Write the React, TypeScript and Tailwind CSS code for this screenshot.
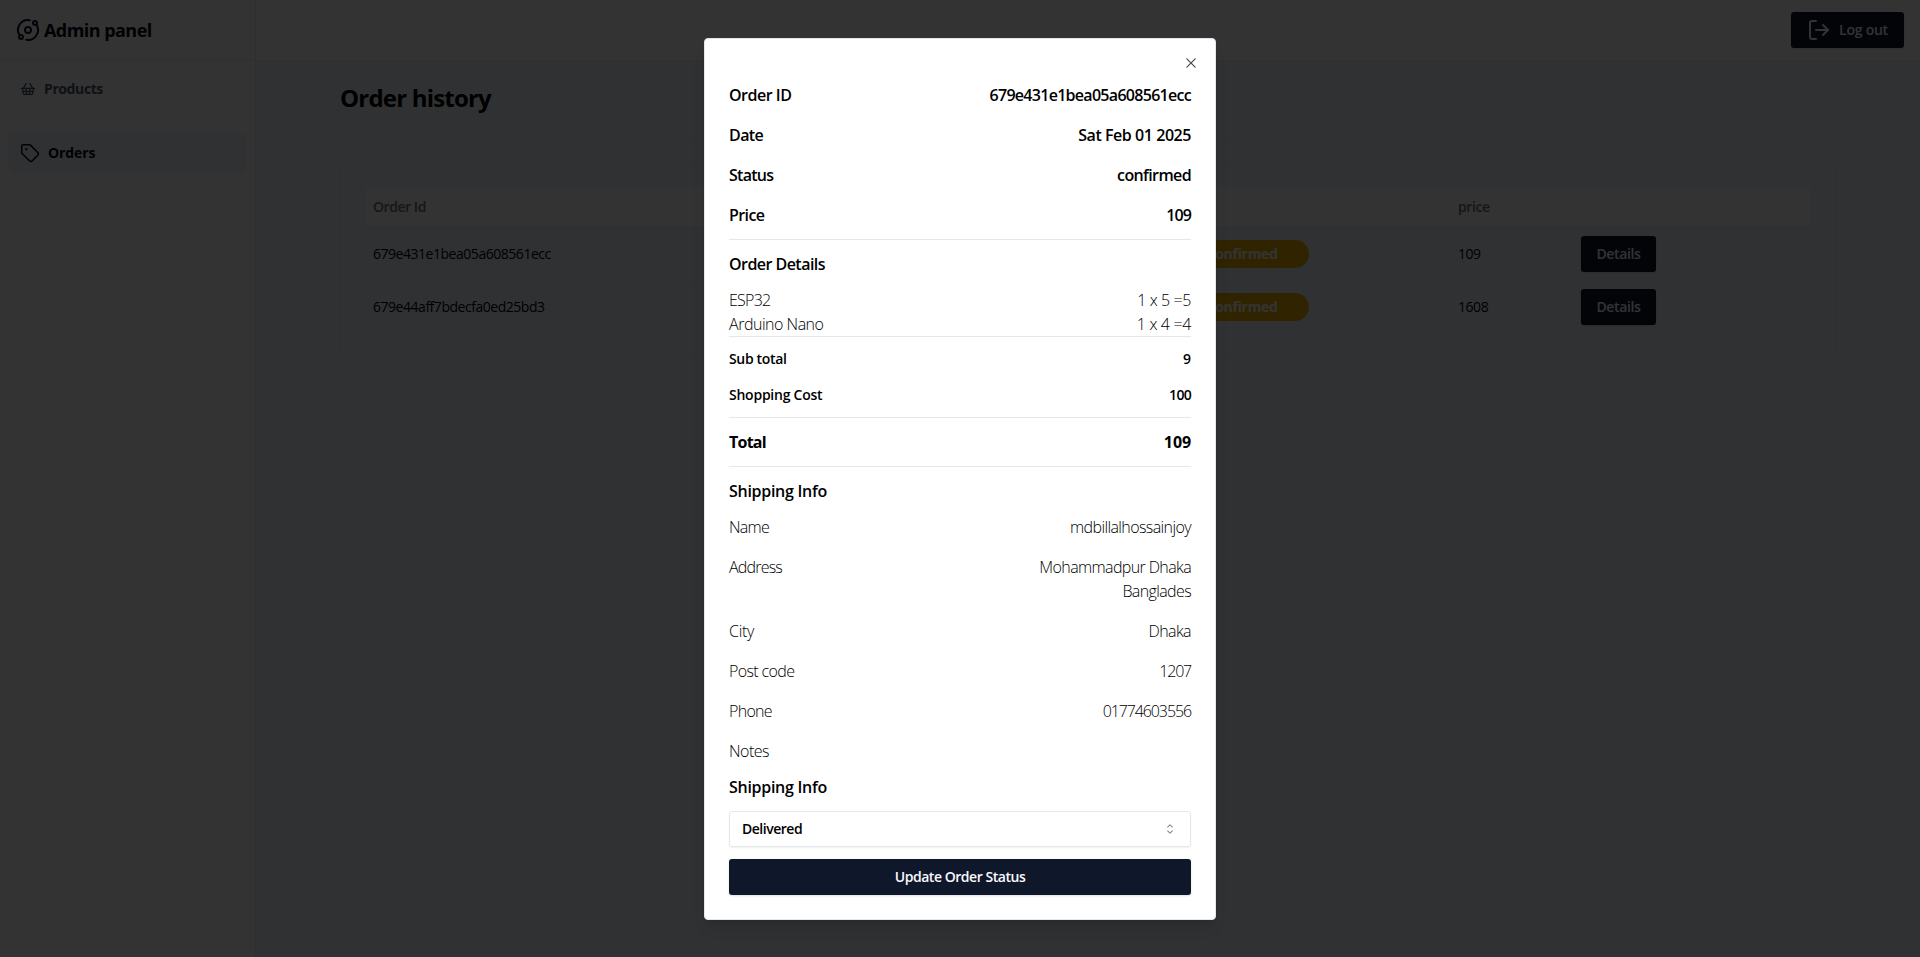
import React from "react";
import { LogOut, Orbit, ShoppingBasket, Tag } from "lucide-react";
import { RxCaretSort, RxCross2 } from "react-icons/rx";

const orders = [
  { id: "679e431e1bea05a608561ecc", price: "109" },
  { id: "679e44aff7bdecfa0ed25bd3", price: "1608" },
];

type LineProps = {
  label: string;
  value: string;
  className?: string;
  labelClass?: string;
  valueClass?: string;
};

function Line({ label, value, className = "", labelClass = "", valueClass = "" }: LineProps) {
  return (
    <div className={`flex items-start justify-between ${className}`}>
      <span className={`whitespace-nowrap ${labelClass}`}>{label}</span>
      <span className={`text-right ${valueClass}`}>{value}</span>
    </div>
  );
}

function Sidebar() {
  return (
    <aside className="flex w-64 shrink-0 flex-col border-r border-slate-200 bg-white">
      <div className="flex h-[61px] items-center gap-1 border-b border-slate-200 px-4 text-slate-900">
        <Orbit size={24} />
        <span className="text-lg font-bold tracking-[-0.55px] text-slate-950">Admin panel</span>
      </div>
      <nav className="flex flex-col px-2 pt-2 text-sm">
        <div className="flex h-10 items-center gap-2 px-3 font-bold tracking-[-0.4px] text-slate-600">
          <ShoppingBasket size={16} />
          <span>Products</span>
        </div>
        <div className="mt-6 flex h-10 items-center gap-2 rounded-md bg-slate-100 px-3 font-bold tracking-[-0.1px] text-slate-950">
          <Tag size={20} strokeWidth={1.8} />
          <span>Orders</span>
        </div>
      </nav>
    </aside>
  );
}

function OrdersTable() {
  return (
    <div className="mt-6 h-[196px] rounded-lg border border-slate-200 p-6">
      <table className="w-full table-fixed border-separate border-spacing-0 text-sm">
        <colgroup>
          <col className="w-[350px]" />
          <col className="w-[323px]" />
          <col className="w-[412px]" />
          <col className="w-[123px]" />
          <col />
        </colgroup>
        <thead>
          <tr className="bg-white text-left text-slate-500 [&>th]:h-[41px] [&>th]:border-b [&>th]:border-slate-200 [&>th]:p-0 [&>th]:px-2">
            <th className="font-semibold tracking-[-0.45px]">Order Id</th>
            <th />
            <th />
            <th className="font-semibold tracking-[-0.4px]">price</th>
            <th />
          </tr>
        </thead>
        <tbody>
          {orders.map((o) => (
            <tr
              key={o.id}
              className="[&>td]:h-[53px] [&>td]:border-b [&>td]:border-slate-200 [&>td]:p-0 [&>td]:px-2 last:[&>td]:h-[52px] last:[&>td]:border-b-0"
            >
              <td className="tracking-[-0.47px]">{o.id}</td>
              <td />
              <td>
                <span className="mx-auto flex h-7 w-[130px] items-center justify-center rounded-full bg-yellow-500 pr-0.5 font-bold tracking-[-0.3px] text-white">
                  confirmed
                </span>
              </td>
              <td className="tracking-[-0.45px]">{o.price}</td>
              <td>
                <button className="flex h-9 w-[75px] items-center justify-center rounded-[3px] bg-slate-900 font-semibold tracking-[-0.35px] text-slate-50 shadow-sm">
                  Details
                </button>
              </td>
            </tr>
          ))}
        </tbody>
      </table>
    </div>
  );
}

function OrderDialog() {
  return (
    <div className="relative flex h-[882px] w-[512px] flex-col rounded-[4px] border border-slate-200 bg-white px-6 pt-11 text-base text-black shadow-lg">
      <RxCross2 size={16} className="absolute right-4 top-4 opacity-70" />
      <div className="flex flex-col gap-4 border-b border-slate-200 pb-3 font-semibold">
        <Line label="Order ID" labelClass="tracking-[-0.5px]" value="679e431e1bea05a608561ecc" valueClass="tracking-[-0.71px]" />
        <Line label="Date" labelClass="tracking-[-0.6px]" value="Sat Feb 01 2025" valueClass="tracking-[-0.45px]" />
        <Line label="Status" labelClass="tracking-[-0.75px]" value="confirmed" valueClass="tracking-[-0.62px]" />
        <Line label="Price" labelClass="tracking-[-0.6px]" value="109" valueClass="tracking-[-0.9px]" />
      </div>
      <h3 className="mt-3 font-semibold tracking-[-0.54px]">Order Details</h3>
      <div className="mt-3 border-b border-slate-200 font-light">
        <Line label="ESP32" labelClass="tracking-[-0.75px]" value="1 x 5 =5" valueClass="tracking-[-0.4px]" />
        <Line label="Arduino Nano" labelClass="tracking-[-0.48px]" value="1 x 4 =4" valueClass="tracking-[-0.35px]" />
      </div>
      <div className="flex flex-col gap-4 border-b border-slate-200 py-3 text-sm font-semibold">
        <Line label="Sub total" labelClass="tracking-[-0.33px]" value="9" />
        <Line label="Shopping Cost" labelClass="tracking-[-0.24px]" value="100" valueClass="tracking-[-0.7px]" />
      </div>
      <Line
        label="Total"
        labelClass="tracking-[-0.75px]"
        value="109"
        valueClass="tracking-[-0.1px]"
        className="border-b border-slate-200 py-3 font-bold"
      />
      <h3 className="mt-3 font-semibold tracking-[-0.28px]">Shipping Info</h3>
      <div className="mt-3 flex flex-col gap-4 font-light">
        <Line label="Name" labelClass="tracking-[-0.7px]" value="mdbillalhossainjoy" valueClass="tracking-[-0.6px]" />
        <Line
          label="Address"
          labelClass="tracking-[-0.8px]"
          value="Mohammadpur Dhaka Banglades"
          valueClass="w-[168px] tracking-[-0.62px]"
        />
        <Line label="City" labelClass="tracking-[-0.3px]" value="Dhaka" valueClass="tracking-[-0.6px]" />
        <Line label="Post code" labelClass="tracking-[-0.62px]" value="1207" valueClass="tracking-[-1.2px]" />
        <Line label="Phone" labelClass="tracking-[-0.7px]" value="01774603556" valueClass="tracking-[-1.1px]" />
        <Line label="Notes" labelClass="tracking-[-0.5px]" value="" />
      </div>
      <h3 className="mt-3 font-semibold tracking-[-0.28px]">Shipping Info</h3>
      <div className="mt-3 flex h-9 items-center justify-between rounded-[3px] border border-slate-200 px-3 text-sm font-semibold tracking-[-0.48px] shadow-xs">
        <span>Delivered</span>
        <RxCaretSort size={16} className="opacity-50" />
      </div>
      <button className="mt-3 h-9 rounded-[3px] bg-slate-900 text-sm font-semibold tracking-[-0.46px] text-slate-50 shadow-sm">
        Update Order Status
      </button>
    </div>
  );
}

export default function App() {
  return (
    <div className="relative flex h-[957px] w-full overflow-hidden bg-slate-100 font-['Open_Sans','Noto_Sans',sans-serif] text-black">
      <Sidebar />
      <main className="flex flex-1 flex-col">
        <header className="flex h-[61px] items-center justify-end border-b border-slate-200 bg-white px-4">
          <button className="flex h-9 w-[113px] items-center justify-center gap-2 rounded-[3px] bg-slate-900 text-sm font-semibold tracking-[-0.25px] text-slate-50 shadow-sm">
            <LogOut size={24} />
            Log out
          </button>
        </header>
        <section className="mx-[84px] pt-[21px]">
          <h1 className="border-b border-slate-200 pb-[23px] text-2xl font-bold tracking-[-0.8px]">Order history</h1>
          <OrdersTable />
        </section>
      </main>
      <div className="absolute inset-0 flex items-center justify-center bg-black/80">
        <OrderDialog />
      </div>
    </div>
  );
}
